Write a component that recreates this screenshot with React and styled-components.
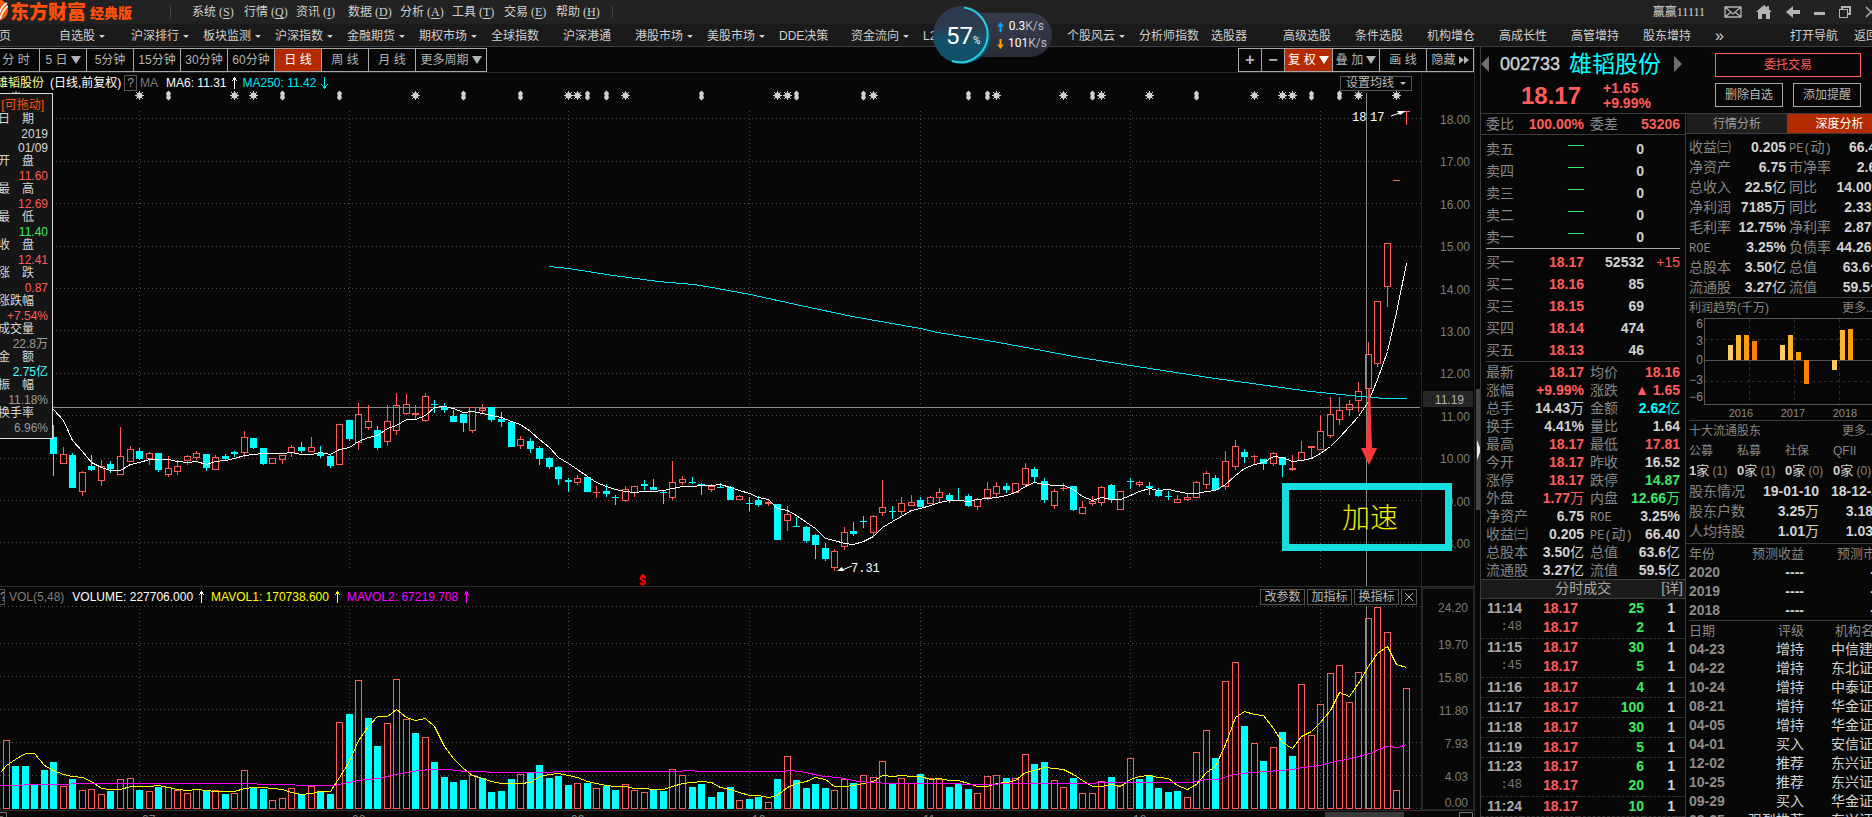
import React from "react";
import styled, { createGlobalStyle, css } from "styled-components";

const c = {
  bg: "#070707",
  line: "#3c3c3c",
  faint: "#262626",
  grid: "#505050",
  label: "#868686",
  text: "#d2d2d2",
  up: "#ff5c5c",
  down: "#3ce864",
  cyan: "#00ffff",
  accent: "#b42a00",
};
const tones = { up: c.up, down: c.down, cyan: c.cyan, text: c.text, dim: "#8c8c8c" };
const sans = '"Liberation Sans", "Noto Sans CJK SC", sans-serif';
const song = '"Liberation Serif", "Noto Sans CJK SC", serif';

const Global = createGlobalStyle`
  * { box-sizing: border-box; }
  body { margin: 0; background: ${c.bg}; color: ${c.text}; font: 12px/14px ${sans}; overflow: hidden; }
  button { font: inherit; color: inherit; background: none; border: 0; padding: 0; margin: 0; white-space: nowrap; }
  a { color: inherit; text-decoration: none; }
  svg { display: block; }
  h1, h2, p { margin: 0; font: inherit; }
`;

/* ---------- frame ---------- */
const Shell = styled.div`
  position: relative;
  display: flex;
  flex-direction: column;
  height: 100vh;
  overflow: hidden;
`;
const TitleBar = styled.header`
  display: flex;
  align-items: center;
  height: 24px;
  flex: none;
  background: #222;
  overflow: hidden;
  font-family: ${song};
`;
const Brand = styled.div`
  display: flex;
  align-items: center;
  width: 171px;
  height: 12px;
  border-right: 1px solid #444;
  color: #ff4f0a;
  font-weight: 900;
  font-family: "Noto Sans CJK SC", sans-serif;
`;
const BrandName = styled.span`
  font-size: 19px;
  line-height: 20px;
  margin: 0 0 2px 2px;
`;
const BrandEdition = styled.span`
  font-size: 14px;
  line-height: 14px;
  margin-left: 4px;
`;
const MenuList = styled.nav`
  display: flex;
  width: 442px;
  padding-left: 21px;
  height: 12px;
  align-items: center;
  border-right: 1px solid #444;
`;
const MenuButton = styled.button`
  width: 52px;
  flex: none;
  text-align: left;
  line-height: 16px;
  color: #cfcfcf;
  u { text-underline-offset: 2px; }
`;
const Account = styled.div`
  display: flex;
  align-items: center;
  margin-left: auto;
  color: #cfcfcf;
`;
const WindowIcons = styled.div`
  display: flex;
  align-items: center;
  gap: 14px;
  margin-left: 19px;
  width: 148px;
  button { flex: none; }
`;

const NavBar = styled.nav`
  display: flex;
  align-items: center;
  height: 23px;
  flex: none;
  padding-top: 2px;
  background: #1a1a1a;
  border-bottom: 1px solid ${c.line};
  overflow: hidden;
`;
const NavLink = styled.a`
  flex: none;
  width: ${(p) => p.$w || 72}px;
  white-space: nowrap;
  overflow: ${(p) => (p.$clip ? "hidden" : "visible")};
  color: #cfcfcf;
  font-size: ${(p) => p.$size || 12}px;
`;
const HomeLink = styled(NavLink)`
  margin-left: -13px;
`;
const NavEnd = styled.div`
  display: flex;
  margin-left: auto;
`;
const Caret = styled.i`
  display: inline-block;
  margin-left: ${(p) => (p.$gap ? p.$gap : 4)}px;
  vertical-align: middle;
  border: 3px solid transparent;
  border-top-color: currentColor;
  border-bottom: 0;
`;

const Body = styled.main`
  display: flex;
  flex: 1;
  min-height: 0;
`;
const ChartSide = styled.section`
  flex: 1;
  min-width: 0;
  overflow: hidden;
`;
const Splitter = styled.div`
  display: flex;
  align-items: flex-start;
  flex: none;
  width: 6px;
  padding: 342px 0 0 1px;
  border-left: 1px solid ${c.faint};
`;
const SplitHandle = styled.button`
  width: 5px;
  height: 121px;
  background: #454545;
`;
const QuoteSide = styled.aside`
  flex: none;
  width: 392px;
  overflow: hidden;
  border-left: 1px solid ${c.line};
`;

/* ---------- chart toolbar ---------- */
const Toolbar = styled.div`
  display: flex;
  justify-content: space-between;
  height: 26px;
  padding-top: 1px;
  border-bottom: 1px solid ${c.faint};
`;
const ButtonStrip = styled.div`
  display: flex;
  height: 24px;
  margin-left: ${(p) => (p.$open ? -7 : 0)}px;
  border: 1px solid #a8a8a8;
  border-left-width: ${(p) => (p.$open ? 0 : 1)}px;
`;
const StripButton = styled.button`
  display: flex;
  align-items: center;
  justify-content: center;
  gap: 3px;
  width: ${(p) => p.$w || 47}px;
  color: #b4b4b4;
  border-right: 1px solid #a8a8a8;
  &:last-child { border-right: 0; }
  ${(p) => p.$active && css`background: ${c.accent}; color: #fff;`}
  b { font-size: 16px; }
`;
const Drop = styled.i`
  border: 5px solid transparent;
  border-top: 8px solid currentColor;
  border-bottom: 0;
`;

/* ---------- chart panes ---------- */
const Pane = styled.div`
  position: relative;
  display: grid;
  grid-template-columns: minmax(0, 1fr) 53px;
  border-bottom: 1px solid #2c2c2c;
`;
const Plot = styled.div`
  min-width: 0;
`;
const ChartSvg = styled.svg`
  overflow: visible;
`;
const Axis = styled.div`
  border-left: 1px solid ${c.faint};
`;
const VolumeAxis = styled(Axis)`
  border: 2px solid ${c.faint};
  border-width: 2px 1px 1px 2px;
`;
const Legend = styled.div`
  display: flex;
  align-items: center;
  height: ${(p) => p.$h}px;
  white-space: nowrap;
  overflow: hidden;
`;
const StockTag = styled.span`
  margin-left: -4px;
  width: 54px;
  color: #ffff9c;
`;
const PlotTitle = styled.span`
  width: 74px;
  color: #fff;
`;
const HelpButton = styled.button`
  width: ${(p) => p.$w || 13}px;
  height: 16px;
  line-height: 14px;
  flex: none;
  overflow: hidden;
  border: 1px solid #555;
  border-left-width: ${(p) => (p.$w ? 0 : 1)}px;
  color: #9a9a9a;
`;
const Series = styled.span`
  color: ${(p) => p.$color};
  margin-left: ${(p) => p.$gap || 8}px;
`;
const Trend = styled.svg`
  margin-left: 5px;
`;
const LegendTools = styled.div`
  display: flex;
  gap: 2px;
  margin: 0 4px 0 auto;
`;
const ToolButton = styled.button`
  height: 16px;
  line-height: 14px;
  width: ${(p) => p.$w}px;
  border: 1px solid #555;
  color: #b8b8b8;
`;
const MaSettings = styled(ToolButton)`
  margin: 0 9px 0 auto;
  height: 15px;
  line-height: 12px;
`;
const DataTip = styled.div`
  position: absolute;
  left: -20px;
  top: 20px;
  width: 73px;
  height: 346px;
  padding: 4px 4px 0 0;
  border: 1px solid #dcdcdc;
  background: #151515;
  text-align: right;
`;
const DragHint = styled.p`
  color: #ff5010;
  margin-right: 4px;
  white-space: nowrap;
`;
const TipLabel = styled.p`
  margin-right: 14px;
  color: #d8d8d8;
  white-space: nowrap;
`;
const TipValue = styled.p`
  color: ${(p) => p.$color || "#d8d8d8"};
  padding-top: 1px;
  height: 14px;
`;
const Callout = styled.div`
  position: absolute;
  left: 1282px;
  top: 410px;
  width: 170px;
  height: 68px;
  padding-left: 6px;
  border: 7px solid #17dede;
  color: #f4f400;
  font-size: 28px;
  line-height: 58px;
  text-align: center;
  font-weight: 300;
`;
const CalloutArrow = styled.svg`
  position: absolute;
  left: 1361px;
  top: 315px;
`;
const TimeStrip = styled.div`
  height: 20px;
  overflow: hidden;
`;

/* ---------- speed widget ---------- */
const SpeedWidget = styled.div`
  position: absolute;
  left: 933px;
  top: 6px;
  display: flex;
  align-items: center;
`;
const SpeedDial = styled.div`
  position: relative;
  z-index: 1;
  width: 58px;
  height: 58px;
  padding: 17px 0 0 13px;
  border-radius: 50%;
  background: linear-gradient(#2b3a4e 0 35%, #14526a 60%, #0f5068);
  color: #fff;
  font: 24px/26px Roboto, sans-serif;
  white-space: nowrap;
  small { font-size: 10px; }
  svg { position: absolute; inset: 0; }
`;
const SpeedRates = styled.div`
  width: 78px;
  height: 44px;
  margin-left: -17px;
  padding: 5px 0 0 23px;
  border-radius: 0 22px 22px 0;
  background: linear-gradient(rgba(56, 61, 79, 0.95), rgba(42, 45, 56, 0.95));
  font: 12px/17px Roboto, sans-serif;
  color: #fff;
  p { display: flex; align-items: center; gap: 4px; }
  span { width: 36px; text-align: right; }
  i { font-style: normal; color: #b9bcc6; }
`;

/* ---------- quote side ---------- */
const QuoteHead = styled.div`
  display: flex;
  justify-content: space-between;
  height: 67px;
  padding-right: 11px;
  border-bottom: 1px solid ${c.line};
`;
const NameRow = styled.div`
  display: flex;
  align-items: center;
  padding-top: 2px;
  height: 32px;
`;
const StockCode = styled.span`
  margin-left: 11px;
  width: 69px;
  font-size: 18px;
  -webkit-text-stroke: 0.4px currentColor;
`;
const StockName = styled.h1`
  width: 105px;
  font-size: 23px;
  line-height: 28px;
  color: ${c.cyan};
`;
const PriceRow = styled.div`
  display: flex;
  align-items: center;
  height: 34px;
  color: ${c.up};
  font-weight: bold;
`;
const LastPrice = styled.span`
  margin-left: 40px;
  width: 82px;
  font-size: 24px;
  line-height: 28px;
`;
const Change = styled.div`
  font-size: 14px;
  line-height: 15px;
`;
const HeadActions = styled.div`
  display: grid;
  grid-template-columns: 68px 68px;
  grid-auto-rows: 24px;
  gap: 6px 10px;
  padding-top: 6px;
`;
const ActionButton = styled.button`
  border: 1px solid #a8a8a8;
  color: #b8b8b8;
`;
const TradeButton = styled(ActionButton)`
  grid-column: span 2;
  border-color: ${c.up};
  color: ${c.up};
`;
const QuoteColumns = styled.div`
  display: flex;
`;
const BookColumn = styled.div`
  flex: none;
  width: 205px;
  border-right: 1px solid ${c.line};
`;
const DepthColumn = styled.div`
  flex: none;
  width: 206px;
`;
const Block = styled.div`
  margin: ${(p) => p.$m || "0 5px"};
  padding: ${(p) => p.$p || 0};
  border-bottom: 1px solid ${(p) => p.$line || c.line};
`;
const Table = styled.table`
  width: 100%;
  table-layout: fixed;
  border-collapse: collapse;
  td, th {
    padding: 0;
    height: ${(p) => p.$row}px;
    line-height: ${(p) => p.$row - 2}px;
    font-size: 14px;
    font-weight: normal;
    white-space: nowrap;
    text-align: left;
  }
`;
const LabelCell = styled.th`
  && { color: ${c.label}; padding-left: ${(p) => p.$pad || 0}px; font-size: ${(p) => p.$size || 14}px; text-align: ${(p) => p.$align || "left"}; }
  code { font: 12px "Liberation Mono", monospace; }
`;
const ValueCell = styled.td`
  && {
    color: ${(p) => tones[p.$tone || "text"]};
    text-align: ${(p) => p.$align || "right"};
    font-weight: ${(p) => (p.$plain ? "normal" : "bold")};
    padding-left: ${(p) => p.$pad || 0}px;
  }
  span { font-weight: normal; }
`;
const NoPrice = styled.i`
  display: block;
  width: 16px;
  height: 1px;
  margin: 0 0 8px auto;
  background: ${c.down};
`;
const TicksHead = styled.div`
  display: flex;
  justify-content: flex-end;
  height: 19px;
  line-height: 17px;
  padding-right: 2px;
  background: #1b1b1b;
  border-bottom: 1px solid ${c.line};
  color: #a6a6a6;
  font-size: 14px;
  h2 { margin-right: 50px; }
`;
const TickRow = styled.tr`
  && td {
    height: ${(p) => (p.$end ? 20 : 19)}px;
    border-bottom: ${(p) => (p.$end ? "1px dashed #303030" : "0")};
  }
`;
const TimeCell = styled(ValueCell)`
  && { color: #a8a8a8; ${(p) => p.$sub && "color:#777;font-size:12px;font-weight:normal;font-family:'Liberation Mono',monospace;"} }
`;
const Tabs = styled.div`
  display: flex;
  height: 20px;
  padding-left: 1px;
  border-bottom: 1px solid ${c.line};
`;
const Tab = styled.button`
  width: ${(p) => p.$w}px;
  line-height: 18px;
  background: ${(p) => (p.$active ? c.accent : "#1e1e1e")};
  color: ${(p) => (p.$active ? "#fff" : "#a0a0a0")};
`;
const SectionTitle = styled.div`
  display: flex;
  height: 20px;
  line-height: 20px;
  color: ${c.label};
  h2 { width: 153px; }
`;
const Holders = styled.div`
  display: grid;
  grid-template-columns: repeat(4, 48px);
  line-height: 20px;
  color: ${c.label};
  b { color: ${c.text}; font-size: 13px; }
  b span { font-weight: normal; }
`;
const HolderCell = styled.span`
  white-space: nowrap;
`;

/* ---------- data ---------- */
const menus = [["系统", "S"], ["行情", "Q"], ["资讯", "I"], ["数据", "D"], ["分析", "A"], ["工具", "T"], ["交易", "E"], ["帮助", "H"]];
const navItems = ["自选股▾", "沪深排行▾", "板块监测▾", "沪深指数▾", "金融期货▾", "期权市场▾", "全球指数", "沪深港通", "港股市场▾", "美股市场▾", "DDE决策", "资金流向▾", "L2核心", "千股千评", "个股风云▾", "分析师指数", "选股器", "高级选股", "条件选股", "机构增仓", "高成长性", "高管增持", "股东增持"];
const periods = [["分 时"], ["5 日▼"], ["5分钟"], ["15分钟"], ["30分钟"], ["60分钟"], ["日 线", 47, true], ["周 线"], ["月 线"], ["更多周期▼", 70]];

// kind (r = up, c = down), then high, body top, body bottom, low
const candleText = `c345,357,374,396 r367,374,384,384 c373,375,408,408 r391,392,412,416 c375,386,390,391 r380,386,401,406 c381,384,389,393 r347,376,395,395 r366,369,382,382 c368,371,379,380
r372,373,379,385 c373,373,390,392 r376,388,395,397 r380,386,392,395 r375,376,381,385 r371,373,378,380 c374,374,388,391 r375,377,390,390 c374,376,379,381 c371,372,374,377
r351,357,373,377 c358,358,368,369 c368,368,384,385 r378,378,384,384 r375,375,380,384 r365,367,373,377 c362,367,371,373 r357,367,372,372 c366,373,376,378 c375,376,386,388
r344,344,385,385 c340,340,359,361 r323,334,363,370 r325,341,348,350 c346,350,368,370 r325,341,362,366 r313,325,351,355 r314,324,334,335 r325,333,335,339 r313,316,341,342
c320,324,325,333 c323,327,330,333 c330,336,342,342 c334,334,343,352 r327,327,351,353 r324,328,331,334 c327,327,340,342 c332,339,342,347 c342,342,367,367 r356,359,366,369
c358,361,369,373 c366,368,379,385 c377,378,387,389 c386,387,399,405 c398,400,402,412 r395,398,403,405 c397,397,412,412 r406,412,413,418 c404,411,414,417 c415,417,418,425
r406,409,421,422 r406,406,413,417 c400,404,406,410 c399,407,410,410 c411,412,413,424 r381,402,418,420 r396,399,403,405 c397,402,403,404 c403,404,405,415 r404,406,410,412
c403,407,408,408 c406,407,420,420 r415,416,420,420 c417,423,424,431 c416,420,425,427 r421,422,424,426 c424,424,460,460 r426,434,441,451 c437,446,447,447 c446,447,461,463
c454,455,465,479 c463,468,479,481 r469,471,488,491 r447,452,467,470 c442,451,454,456 c436,441,442,448 r435,436,453,457 r400,427,433,436 c426,431,432,439 r417,423,432,435
r415,422,426,426 c417,420,427,427 r416,417,424,424 r408,412,418,423 c413,415,420,423 c408,420,421,421 c414,416,426,427 r418,419,427,430 r402,409,418,420 r402,406,414,417
c403,406,410,413 r403,403,413,413 r383,388,405,406 c387,389,397,402 c398,401,420,423 r409,411,426,429 r403,408,409,411 c406,406,430,431 r421,427,434,434 r416,421,424,426
r406,407,423,426 c404,405,420,423 r411,411,430,430 c398,401,402,409 r401,402,405,407 c402,406,408,415 c408,411,416,417 c411,416,417,420 r415,419,423,423 r414,417,420,421
r401,402,418,418 r391,393,405,409 c395,398,410,410 r371,381,407,410 r360,366,387,390 c369,372,377,383 r375,376,377,385 c379,379,384,390 r372,373,384,386 c377,377,385,397
r375,388,390,391 r361,372,381,381 r366,366,368,379 r335,351,370,370 r317,334,356,358 r317,330,340,345 r320,324,330,336 r302,311,321,332 r262,274,309,320 r221,221,284,287
r163,163,207,227 r100,100,101,101 r31,31,32,45`;
const candles = candleText.split(/\s+/).map((s) => [s[0], ...s.slice(1).split(",").map(Number)]);

const volumeText = `r69 c43 c43 c25 c39 c47 r23 c30 r19 r20 r15 c18 r30 r31 c19 r18 c22 r22 r19 r16 r20 c18 r19 c15 r16 r39 c22 c20 r9 r11 r21 c15 r23 c18 c15 r87 c95 r129 c91 c63 r86 r130 r90 c76 r72 c47 c32 c27 c29 r34 c31 c17 c18 c30 r35 c36 c44 c31 c33 c24 r26 c26 r21 c23 c19 r25 r19 r17 c20 c18 r40 r34 c22 c25 c12 c17 c22 r9 c10 c12 r7 c30 r53 c29 c21 c25 c21 r19 r30 c26 r34 r32 r48 c26 r31 r26 c35 r31 r30 c22 c25 c20 r16 r33 r34 c31 r31 r55 c45 c47 r29 r22 c31 r16 r16 r28 c32 r24 r51 c30 c34 c21 c17 c18 r12 r57 r79 c51 r128 r147 c83 r66 c48 r62 c77 c53 r125 r74 r105 r136 r144 r107 r137 r191 r202 r177 r19 r121`;
const volumes = volumeText.split(" ").map((s) => [s[0], Number(s.slice(1))]);
const OFFSET = -5;
const xAt = (i) => Math.round(53.3 + 9.526 * i);

const average = (list, i, n) => list.slice(i - n + 1, i + 1).reduce((a, b) => a + b, 0) / n;
const closes = candles.map(([k, , t, b]) => (k === "r" ? t : b));
const ma6 = closes.map((_, i) => [xAt(i), i < 5 ? [329, 340, 360, 371, 382][i] : average(closes, i, 6)]);
const heights = volumes.map((v) => v[1]);
const BASE = 203;
const mavol1 = [[0, BASE - 37], ...heights.map((_, i) => [xAt(i + OFFSET), BASE - (i < 4 ? [44, 50, 56, 56][i] : average(heights, i, 5))])];
const mavol2 = "0,24 47,25 94,26 245,26 268,25 321,24 333,24 348,27 357,29 379,31 395,35 411,38 429,40 449,40 464,38 509,37 549,37 556,38 676,38 690,39 698,38 782,38 789,39 800,38 824,33 838,32 858,28 889,26 955,26 965,25 1032,26 1093,26 1098,27 1190,27 1205,30 1218,30 1233,35 1251,37 1266,38 1292,40 1302,42 1320,44 1330,47 1351,51 1369,56 1386,63 1398,62 1406,65"
  .split(" ").map((s) => s.split(",").map(Number)).map(([x, h]) => [x, BASE - h]);
const ma250 = [[549, 186], [568, 188], [613, 195], [658, 201], [693, 204], [717, 208], [750, 214], [800, 225], [852, 236], [920, 248], [937, 252], [987, 260], [1042, 270], [1073, 276], [1130, 285], [1208, 297], [1310, 311], [1360, 316], [1384, 318], [1406, 318]];
const months = [[139, "07"], [349, "08"], [568, "09"], [749, "10"], [920, "11"], [1130, "12"], [1320, ""]];
const suns = [9, 19, 21, 38, 54, 55, 60, 76, 77, 86, 99, 106, 110, 115, 126, 129, 130, 137, 141];
const splits = [12, 24, 30, 43, 49, 56, 58, 68, 78, 85, 96, 98, 109, 120, 132, 135];
const path = (pts) => pts.map(([x, y]) => `${x},${Math.round(y)}`).join(" ");

const tip = [
  ["开　盘", "11.60", c.up], ["最　高", "12.69", c.up], ["最　低", "11.40", c.down], ["收　盘", "12.41", c.up], ["涨　跌", "0.87", c.up],
  ["涨跌幅", "+7.54%", c.up], ["成交量", "22.8万", "#9a9a9a"], ["金　额", "2.75亿", "#54ffff"], ["振　幅", "11.18%", "#9a9a9a"], ["换手率", "6.96%", "#9a9a9a"],
];
const bids = [["买一", "18.17", "52532", "+15"], ["买二", "18.16", "85"], ["买三", "18.15", "69"], ["买四", "18.14", "474"], ["买五", "18.13", "46"]];
const stats = [
  ["最新", "18.17", "up", "均价", "18.16", "up"], ["涨幅", "+9.99%", "up", "涨跌", "▲ 1.65", "up"], ["总手", "14.43万", "text", "金额", "2.62亿", "cyan"],
  ["换手", "4.41%", "text", "量比", "1.64", "text"], ["最高", "18.17", "up", "最低", "17.81", "up"], ["今开", "18.17", "up", "昨收", "16.52", "text"],
  ["涨停", "18.17", "up", "跌停", "14.87", "down"], ["外盘", "1.77万", "up", "内盘", "12.66万", "down"], ["净资产", "6.75", "text", "ROE", "3.25%", "text"],
  ["收益㈢", "0.205", "text", "PE(动)", "66.40", "text"], ["总股本", "3.50亿", "text", "总值", "63.6亿", "text"], ["流通股", "3.27亿", "text", "流值", "59.5亿", "text"],
];
const ticks = [
  ["11:14", "25"], [":48", "2", 1], ["11:15", "30"], [":45", "5", 1], ["11:16", "4", 1], ["11:17", "100", 1], ["11:18", "30", 1],
  ["11:19", "5", 1], ["11:23", "6"], [":48", "20", 1], ["11:24", "10", 1],
];
const finance = [
  ["收益㈢", "0.205", "PE(动)", "66.40"], ["净资产", "6.75", "市净率", "2.69"], ["总收入", "22.5亿", "同比", "14.00%"], ["净利润", "7185万", "同比", "2.33%"],
  ["毛利率", "12.75%", "净利率", "2.87%"], ["ROE", "3.25%", "负债率", "44.26%"], ["总股本", "3.50亿", "总值", "63.6亿"], ["流通股", "3.27亿", "流值", "59.5亿"],
];
const ratings = [
  ["04-23", "增持", "中信建投"], ["04-22", "增持", "东北证券"], ["10-24", "增持", "中泰证券"], ["08-21", "增持", "华金证券"], ["04-05", "增持", "华金证券"],
  ["04-01", "买入", "安信证券"], ["12-02", "推荐", "东兴证券"], ["10-25", "推荐", "东兴证券"], ["09-29", "买入", "华金证券"], ["08-25", "强烈推荐", "东兴证券"],
];

/* ---------- small pieces ---------- */
const Num = ({ children }) => {
  const m = /^(.*?)([万亿家]?)$/.exec(children);
  return <>{m[1]}{m[2] && <span>{m[2]}</span>}</>;
};
const Label = ({ children, ...rest }) => (
  <LabelCell scope="row" {...rest}>
    {children.split(/([A-Z]+\(?|\))/).map((s, i) => (/^[A-Z()]+$/.test(s) ? <code key={i}>{s}</code> : s))}
  </LabelCell>
);
const Cols = ({ widths }) => <colgroup>{widths.map((w, i) => <col key={i} width={w || undefined} />)}</colgroup>;
const NavText = ({ t }) => (t.endsWith("▾") ? <>{t.slice(0, -1)}<Caret /></> : t);
const TrendArrow = ({ color, down }) => (
  <Trend width="7" height="12" viewBox="0 0 7 12" fill="none" stroke={color} shapeRendering="crispEdges">
    <path d={down ? "M3.5 0V11M0.5 7.5L3.5 11L6.5 7.5" : "M3.5 12V1M0.5 4.5L3.5 1L6.5 4.5"} />
  </Trend>
);

const Sun = ({ x, y }) => (
  <g transform={`translate(${x} ${y})`} stroke="#d0d0d0" fill="#d0d0d0">
    <circle r="3" stroke="none" />
    <path d="M0 -4.5V4.5M-4.5 0H4.5M-3.5 -3.5L3.5 3.5M3.5 -3.5L-3.5 3.5" />
  </g>
);
const Split = ({ x, y }) => <path transform={`translate(${x} ${y})`} fill="#d0d0d0" d="M0 -5L2.5 -2.5L1.8 0L2.5 2.5L0 5L-2.5 2.5L-1.8 0L-2.5 -2.5Z" />;

const GridX = ({ y }) => <line x1="0" x2="100%" y1={y} y2={y} stroke={c.grid} strokeDasharray="1 3" />;
const GridY = ({ x, y1, y2 }) => <line x1={x} x2={x} y1={y1} y2={y2} stroke={c.grid} strokeDasharray="1 3" />;

function PriceChart() {
  return (
    <ChartSvg width="100%" height="493" shapeRendering="crispEdges" role="img" aria-label="日线">
      <g transform="translate(0 -13)">
        {Array.from({ length: 11 }, (_, k) => <GridX key={k} y={Math.round(38.4 + 42.4 * k) + 0.5} />)}
        {months.map(([x]) => <GridY key={x} x={x + 0.5} y1={31} y2={489} />)}
        <line x1="0" x2="1420" y1="327.5" y2="327.5" stroke="#8a8a8a" />
        <line x1="1366.5" x2="1366.5" y1="13" y2="506" stroke="#8a8a8a" />
        {candles.map(([k, h, t, b, l], i) => {
          const x = xAt(i);
          const red = k === "r";
          const color = red ? c.up : c.cyan;
          return (
            <g key={i} fill={red && b - t > 2 ? "none" : color} stroke="none">
              {t > h && <rect x={x} y={h} width="1" height={t - h} fill={color} />}
              {l > b && <rect x={x} y={b} width="1" height={l - b} fill={color} />}
              {red && b - t > 2
                ? <rect x={x - 2.5} y={t + 0.5} width="6" height={b - t - 1} stroke={color} />
                : <rect x={x - 3} y={t} width="7" height={b - t} />}
            </g>
          );
        })}
        <polyline transform="translate(0.5 0.5)" points={path(ma6)} fill="none" stroke="#fff" />
        <polyline transform="translate(0.5 0.5)" points={path(ma250)} fill="none" stroke="#00e5f5" />
        <g shapeRendering="auto">
          <Sun x={16} y={15.5} />
          {suns.map((i) => <Sun key={i} x={xAt(i) + 0.5} y={15.5} />)}
          {splits.map((i) => <Split key={i} x={xAt(i) + 0.5} y={15.5} />)}
          <g stroke="#fff" fill="#fff">
            <path d="M852 486L842 490" />
            <path d="M837 491L842 487L844 491Z" stroke="none" />
            <path d="M1391 36L1400 33" />
            <path d="M1406 31L1397 31L1400 35Z" stroke="none" />
          </g>
          <g fill="#fff" fontFamily="Liberation Mono" fontSize="12">
            <text x="851" y="492">7.31</text>
            <text x="1352" y="41">18</text>
            <text x="1370" y="41">17</text>
          </g>
          <path d="M640.5 498L643 495L645.5 498" fill="none" stroke="#f00" strokeWidth="2" />
          <text x="639" y="505" fill="#f00" fontFamily="Liberation Sans" fontWeight="bold" fontSize="12">$</text>
        </g>
      </g>
    </ChartSvg>
  );
}

function PriceAxis() {
  return (
    <svg width="52" height="513" fontFamily="Liberation Sans" fontSize="12" fill="#7c7c7c" textAnchor="end">
      {Array.from({ length: 11 }, (_, k) => (
        <text key={k} x="48" y={Math.round(51 + 42.4 * k)}>{(18 - k).toFixed(2)}</text>
      ))}
      <rect x="1" y="318" width="50" height="16" fill="#262626" />
      <text x="42" y="331" fill="#b0b0b0">11.19</text>
    </svg>
  );
}

function VolumeChart() {
  return (
    <svg width="100%" height="204" shapeRendering="crispEdges" role="img" aria-label="成交量">
      {[0, 37, 70, 103, 136, 169, 202].map((y) => <GridX key={y} y={y + 0.5} />)}
      {months.map(([x]) => <GridY key={x} x={x + 0.5} y1={3} y2={202} />)}
      <line x1="1366.5" x2="1366.5" y1="0" y2="203" stroke="#8a8a8a" />
      {volumes.map(([k, h], i) => {
        const x = xAt(i + OFFSET);
        return k === "r"
          ? <rect key={i} x={x - 2.5} y={BASE - h + 0.5} width="6" height={h - 1} fill="none" stroke={c.up} />
          : <rect key={i} x={x - 3} y={BASE - h} width="7" height={h} fill={c.cyan} />;
      })}
      <polyline transform="translate(0.5 0.5)" points={path(mavol1)} fill="none" stroke="#ff0" />
      <polyline transform="translate(0.5 0.5)" points={path(mavol2)} fill="none" stroke="#f0f" />
    </svg>
  );
}

function VolumeScale() {
  const rows = [[23, "24.20"], [60, "19.70"], [93, "15.80"], [126, "11.80"], [159, "7.93"], [192, "4.03"], [218, "0.00"]];
  return (
    <svg width="49" height="220" fontFamily="Liberation Sans" fontSize="12" fill="#7c7c7c" textAnchor="end">
      {rows.map(([y, t]) => <text key={t} x="45" y={y}>{t}</text>)}
    </svg>
  );
}

function ProfitChart() {
  const bars = [[39, 15], [47, 25], [55, 25], [63, 19], [91, 15], [99, 25], [107, 8], [115, -24], [143, -10], [151, 30], [159, 31]];
  const fills = ["#ffcb66", "#ffb42d", "#ff9c00", "#ff8000"];
  return (
    <svg width="202" height="102" role="img" aria-label="利润趋势" shapeRendering="crispEdges">
      <g fill="none" stroke="#2e2e2e" strokeDasharray="3 3">
        <path d="M15 21.5H202M15 63.5H202M60.5 1V86M105.5 1V86M150.5 1V86" />
      </g>
      <path d="M202 0.5H15.5V86.5H202M15 42.5H202" fill="none" stroke="#555" />
      {bars.map(([x, h], i) => <rect key={x} x={x} y={h > 0 ? 42 - h : 42} width="5" height={Math.abs(h)} fill={fills[i % 4]} />)}
      <g fill="#8a8a8a" fontFamily="Liberation Sans" fontSize="12" textAnchor="end">
        <text x="14" y="10">6</text><text x="14" y="27">3</text><text x="14" y="46">0</text><text x="14" y="66">−3</text><text x="14" y="83">−6</text>
      </g>
      <g fill="#8a8a8a" fontFamily="Liberation Sans" fontSize="11" textAnchor="middle">
        <text x="52" y="99">2016</text><text x="104" y="99">2017</text><text x="156" y="99">2018</text>
      </g>
    </svg>
  );
}

function TopBars() {
  return (
    <>
      <TitleBar>
        <Brand>
          <svg width="8" height="24" viewBox="0 0 8 24">
            <circle cx="-3" cy="10" r="11" fill="#ff5a12" />
            <path d="M-2 17C0 10 3 5 7 3M0 19C2 13 4 9 8 6" stroke="#fff" strokeWidth="1.6" fill="none" />
          </svg>
          <BrandName>东方财富</BrandName>
          <BrandEdition>经典版</BrandEdition>
        </Brand>
        <MenuList>
          {menus.map(([t, k]) => <MenuButton key={k}>{t} (<u>{k}</u>)</MenuButton>)}
        </MenuList>
        <Account>
          赢赢11111
          <WindowIcons>
            <button aria-label="消息"><svg width="18" height="12" fill="none" stroke="#b4b4b4" strokeWidth="1.3"><path d="M1 1H17V11H1ZM1 1L9 8L17 1M1 11L7 6M17 11L11 6" /></svg></button>
            <button aria-label="主页"><svg width="16" height="14" fill="#b4b4b4"><path d="M8 0L11 2.6V1H13V4.4L16 7H14V14H10V9H6V14H2V7H0Z" /></svg></button>
            <button aria-label="后退"><svg width="14" height="12" fill="#b4b4b4"><path d="M0 6L7 0V4H14V8H7V12Z" /></svg></button>
            <button aria-label="最小化"><svg width="11" height="12" fill="#b4b4b4"><path d="M0 6H11V9H0Z" /></svg></button>
            <button aria-label="还原"><svg width="12" height="12" fill="none" stroke="#b4b4b4" shapeRendering="crispEdges"><path d="M0.5 3.5H8.5V11.5H0.5ZM3 3V1H11V8H9" strokeWidth="1.5" /></svg></button>
            <button aria-label="关闭"><svg width="12" height="12" fill="none" stroke="#b4b4b4" strokeWidth="1.5"><path d="M1 1L11 11M11 1L1 11" /></svg></button>
          </WindowIcons>
        </Account>
      </TitleBar>
      <NavBar>
        <HomeLink href="#home">首页</HomeLink>
        {navItems.map((t) => <NavLink key={t} href="#nav"><NavText t={t} /></NavLink>)}
        <NavLink href="#more" $w={12} $size={16}>»</NavLink>
        <NavEnd>
          <NavLink href="#guide" $w={64}>打开导航</NavLink>
          <NavLink href="#back" $w={18} $clip>返回</NavLink>
        </NavEnd>
      </NavBar>
    </>
  );
}

function Charts() {
  return (
    <ChartSide>
      <Toolbar>
        <ButtonStrip $open>
          {periods.map(([t, w, on]) => (
            <StripButton key={t} $w={w} $active={on}>{t.replace("▼", "")}{t.endsWith("▼") && <Drop />}</StripButton>
          ))}
        </ButtonStrip>
        <ButtonStrip>
          <StripButton $w={23}><b>+</b></StripButton>
          <StripButton $w={23}><b>−</b></StripButton>
          <StripButton $w={48} $active>复 权<Drop /></StripButton>
          <StripButton $w={47}>叠 加<Drop /></StripButton>
          <StripButton $w={47}>画 线</StripButton>
          <StripButton $w={46}>
            隐藏
            <svg width="10" height="8" fill="currentColor"><path d="M0 0L5 4L0 8ZM5 0L10 4L5 8Z" /></svg>
          </StripButton>
        </ButtonStrip>
      </Toolbar>

      <Pane>
        <Plot>
          <Legend $h={20}>
            <StockTag>雄韬股份</StockTag>
            <PlotTitle>(日线,前复权)</PlotTitle>
            <HelpButton>?</HelpButton>
            <Series $color="#7c7c7c" $gap={3}>MA</Series>
            <Series $color="#fff">MA6: 11.31</Series>
            <TrendArrow color="#fff" />
            <Series $color="#00e5f5" $gap={4}>MA250: 11.42</Series>
            <TrendArrow color="#00e5f5" down />
            <MaSettings $w={72}>设置均线<Caret $gap={6} /></MaSettings>
          </Legend>
          <PriceChart />
        </Plot>
        <Axis><PriceAxis /></Axis>
        <DataTip>
          <DragHint>[可拖动]</DragHint>
          <TipLabel>日　期</TipLabel>
          <TipValue>2019</TipValue>
          <TipValue>01/09</TipValue>
          {tip.map(([l, v, col]) => (
            <React.Fragment key={l}>
              <TipLabel>{l}</TipLabel>
              <TipValue $color={col}>{v}</TipValue>
            </React.Fragment>
          ))}
        </DataTip>
        <CalloutArrow width="16" height="77" fill="#fb3838"><path d="M7 0H9L11 60H16L8 77L0 60H5Z" /></CalloutArrow>
        <Callout>加速</Callout>
      </Pane>

      <Pane>
        <Plot>
          <Legend $h={19}>
            <HelpButton $w={5}>?</HelpButton>
            <Series $color="#7c7c7c" $gap={4}>VOL(5,48)</Series>
            <Series $color="#fff">VOLUME: 227706.000</Series>
            <TrendArrow color="#fff" />
            <Series $color="#ff0" $gap={6}>MAVOL1: 170738.600</Series>
            <TrendArrow color="#ff0" />
            <Series $color="#f0f" $gap={6}>MAVOL2: 67219.708</Series>
            <TrendArrow color="#f0f" />
            <LegendTools>
              <ToolButton $w={45}>改参数</ToolButton>
              <ToolButton $w={45}>加指标</ToolButton>
              <ToolButton $w={45}>换指标</ToolButton>
              <ToolButton $w={16} aria-label="关闭指标">
                <svg width="14" height="14" stroke="#b8b8b8"><path d="M3 3L11 11M11 3L3 11" /></svg>
              </ToolButton>
            </LegendTools>
          </Legend>
          <VolumeChart />
        </Plot>
        <VolumeAxis><VolumeScale /></VolumeAxis>
      </Pane>
      <TimeStrip>
        <svg width="100%" height="20" fontFamily="Liberation Sans" fontSize="12" fill="#808080">
          {months.map(([x, t]) => <text key={x} x={x + 3} y="13">{t}</text>)}
          <rect x="1325" y="1" width="79" height="19" fill="#3a3a3a" />
          <path d="M0 1.5H6.5V20M1459.5 20V1.5H1472.5V20" fill="none" stroke="#777" />
          <path d="M0 6H3M1463 6L1466 9L1469 6" stroke="#bbb" fill="none" />
        </svg>
      </TimeStrip>
    </ChartSide>
  );
}

function OrderBook() {
  const main = [42, 56, 44, null];
  const book = [42, 56, 60, null];
  return (
    <BookColumn>
      <Block $m="0" $p="0 5px">
        <Table $row={20}><Cols widths={main} /><tbody><tr>
          <Label>委比</Label><ValueCell $tone="up">100.00%</ValueCell><Label $pad={6}>委差</Label><ValueCell $tone="up">53206</ValueCell>
        </tr></tbody></Table>
      </Block>
      <Block $p="3px 0 0" $line="#a8a8a8">
        <Table $row={22}><Cols widths={book} /><tbody>
          {["卖五", "卖四", "卖三", "卖二", "卖一"].map((l) => (
            <tr key={l}><Label>{l}</Label><ValueCell><NoPrice /></ValueCell><ValueCell>0</ValueCell><td /></tr>
          ))}
        </tbody></Table>
      </Block>
      <Block $p="2px 0 0">
        <Table $row={22}><Cols widths={book} /><tbody>
          {bids.map(([l, p, n, d]) => (
            <tr key={l}><Label>{l}</Label><ValueCell $tone="up">{p}</ValueCell><ValueCell>{n}</ValueCell><ValueCell $tone="up" $plain>{d}</ValueCell></tr>
          ))}
        </tbody></Table>
      </Block>
      <Block $m="0" $p="1px 5px 0">
        <Table $row={18}><Cols widths={main} /><tbody>
          {stats.map(([l, v, t, l2, v2, t2]) => (
            <tr key={l}><Label>{l}</Label><ValueCell $tone={t}><Num>{v}</Num></ValueCell><Label $pad={6}>{l2}</Label><ValueCell $tone={t2}><Num>{v2}</Num></ValueCell></tr>
          ))}
        </tbody></Table>
      </Block>
      <TicksHead><h2>分时成交</h2><a href="#detail">[详]</a></TicksHead>
      <Table $row={19}><Cols widths={[41, 56, 66, 31, null]} /><tbody>
        {ticks.map(([time, n, end], i) => (
          <TickRow key={i} $end={end}>
            <TimeCell $sub={time[0] === ":"}>{time}</TimeCell><ValueCell $tone="up">18.17</ValueCell><ValueCell $tone="down">{n}</ValueCell><ValueCell>1</ValueCell><td />
          </TickRow>
        ))}
      </tbody></Table>
    </BookColumn>
  );
}

function DepthPanel() {
  return (
    <DepthColumn>
      <Tabs><Tab $w={100}>行情分析</Tab><Tab $w={105} $active>深度分析</Tab></Tabs>
      <Block $m="0 0 0 3px" $p="3px 8px 0 0">
        <Table $row={20}><Cols widths={[44, 53, 46, null]} /><tbody>
          {finance.map(([l, v, l2, v2], i) => (
            <tr key={i}><Label>{l}</Label><ValueCell><Num>{v}</Num></ValueCell><Label $pad={3}>{l2}</Label><ValueCell><Num>{v2}</Num></ValueCell></tr>
          ))}
        </tbody></Table>
      </Block>
      <Block $m="0 0 0 3px">
        <SectionTitle><h2>利润趋势(千万)</h2><a href="#profit">更多..</a></SectionTitle>
        <ProfitChart />
      </Block>
      <Block $m="0" $p="0 5px 2px 3px">
        <SectionTitle><h2>十大流通股东</h2><a href="#holders">更多..</a></SectionTitle>
        <Holders>
          {["公募", "私募", "社保", "QFII"].map((t) => <HolderCell key={t}>{t}</HolderCell>)}
          {[["1家", "(1)"], ["0家", "(1)"], ["0家", "(0)"], ["0家", "(0)"]].map(([a, b], i) => <HolderCell key={i}><b><Num>{a}</Num></b> {b}</HolderCell>)}
        </Holders>
        <Table $row={20}><Cols widths={[60, 70, null]} /><tbody>
          <tr><Label>股东情况</Label><ValueCell>19-01-10</ValueCell><ValueCell>18-12-28</ValueCell></tr>
          <tr><Label>股东户数</Label><ValueCell><Num>3.25万</Num></ValueCell><ValueCell><Num>3.18万</Num></ValueCell></tr>
          <tr><Label>人均持股</Label><ValueCell><Num>1.01万</Num></ValueCell><ValueCell><Num>1.03万</Num></ValueCell></tr>
        </tbody></Table>
      </Block>
      <Block $m="0 0 0 3px" $p="0 3px 0 0">
        <Table $row={19}><Cols widths={[44, 71, null]} />
          <thead><tr><Label $size={13}>年份</Label><Label $size={13} $align="right">预测收益</Label><Label $size={13} $align="right">预测市盈</Label></tr></thead>
          <tbody>{["2020", "2019", "2018"].map((y) => (
            <tr key={y}><ValueCell $tone="dim" $align="left">{y}</ValueCell><ValueCell>----</ValueCell><ValueCell>----</ValueCell></tr>
          ))}</tbody>
        </Table>
      </Block>
      <Block $m="0 0 0 3px">
        <Table $row={19}><Cols widths={[44, 71, null]} />
          <thead><tr><Label $size={13}>日期</Label><Label $size={13} $align="right">评级</Label><Label $size={13} $pad={31}>机构名称</Label></tr></thead>
          <tbody>{ratings.map(([d, r, o], i) => (
            <tr key={i}><ValueCell $tone="dim" $align="left">{d}</ValueCell><ValueCell $plain>{r}</ValueCell><ValueCell $plain $align="left" $pad={27}>{o}</ValueCell></tr>
          ))}</tbody>
        </Table>
      </Block>
    </DepthColumn>
  );
}

export default function App() {
  return (
    <Shell>
      <Global />
      <TopBars />
      <Body>
        <Charts />
        <Splitter>
          <SplitHandle aria-label="收起"><svg width="5" height="20" fill="#e8e8e8"><path d="M1 0L5 10L1 20Z" /></svg></SplitHandle>
        </Splitter>
        <QuoteSide>
          <QuoteHead>
            <div>
              <NameRow>
                <button aria-label="上一只"><svg width="8" height="16" fill="#6e6e6e"><path d="M8 0V16L0 8Z" /></svg></button>
                <StockCode>002733</StockCode>
                <StockName>雄韬股份</StockName>
                <button aria-label="下一只"><svg width="8" height="16" fill="#6e6e6e"><path d="M0 0V16L8 8Z" /></svg></button>
              </NameRow>
              <PriceRow>
                <LastPrice>18.17</LastPrice>
                <Change>+1.65<br />+9.99%</Change>
              </PriceRow>
            </div>
            <HeadActions>
              <TradeButton>委托交易</TradeButton>
              <ActionButton>删除自选</ActionButton>
              <ActionButton>添加提醒</ActionButton>
            </HeadActions>
          </QuoteHead>
          <QuoteColumns>
            <OrderBook />
            <DepthPanel />
          </QuoteColumns>
        </QuoteSide>
      </Body>
      <SpeedWidget>
        <SpeedDial>
          <svg width="58" height="58" fill="none" stroke="#29cfe0" strokeWidth="2"><path d="M31 1.5A27.5 27.5 0 1 1 19 55" /></svg>
          57<small>%</small>
        </SpeedDial>
        <SpeedRates>
          <p><svg width="7" height="10" fill="#0aa5ff"><path d="M3.5 0L7 4.5H4.5V10H2.5V4.5H0Z" /></svg><span>0.3<i>K/s</i></span></p>
          <p><svg width="7" height="10" fill="#ff9a0a"><path d="M3.5 10L7 5.5H4.5V0H2.5V5.5H0Z" /></svg><span>101<i>K/s</i></span></p>
        </SpeedRates>
      </SpeedWidget>
    </Shell>
  );
}
